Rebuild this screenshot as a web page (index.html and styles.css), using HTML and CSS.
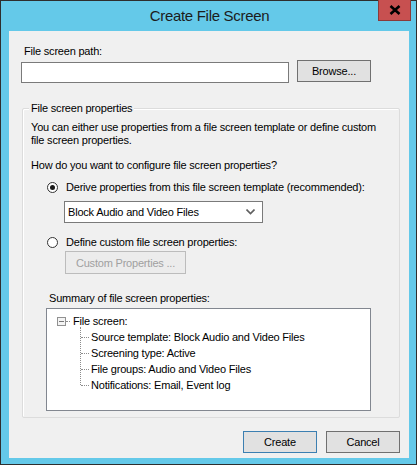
FILE: index.html
```html
<!DOCTYPE html>
<html>
<head>
<meta charset="utf-8">
<link rel="stylesheet" href="styles.css">
</head>
<body>
<div class="window">
  <div class="titlebar">
    <span class="title">Create File Screen</span>
    <div class="close"><svg width="12" height="10" viewBox="0 0 12 10"><path d="M1.5 1 L10.5 9 M10.5 1 L1.5 9" stroke="#000" stroke-width="2.6"/></svg></div>
  </div>
  <div class="client">
    <div class="path-label">File screen path:</div>
    <div class="path-row">
      <div class="textbox"></div>
      <div class="btn browse">Browse...</div>
    </div>
    <div class="group">
      <div class="legend">File screen properties</div>
      <p class="intro">You can either use properties from a file screen template or define custom<br>file screen properties.</p>
      <p class="question">How do you want to configure file screen properties?</p>
      <div class="radio-row r1"><span class="radio checked"></span><span>Derive properties from this file screen template (recommended):</span></div>
      <div class="combo"><span>Block Audio and Video Files</span><svg width="9" height="6" viewBox="0 0 9 6"><path d="M0.5 0.5 L4.5 4.5 L8.5 0.5" stroke="#606060" stroke-width="1.6" fill="none"/></svg></div>
      <div class="radio-row r2"><span class="radio"></span><span>Define custom file screen properties:</span></div>
      <div class="btn disabled custom">Custom Properties ...</div>
      <div class="summary-label">Summary of file screen properties:</div>
      <div class="tree">
        <div class="tree-root"><span class="expander"></span><span class="hdash"></span><span>File screen:</span></div>
        <div class="tree-children">
          <div class="leaf"><span class="hdash"></span>Source template: Block Audio and Video Files</div>
          <div class="leaf"><span class="hdash"></span>Screening type: Active</div>
          <div class="leaf"><span class="hdash"></span>File groups: Audio and Video Files</div>
          <div class="leaf last"><span class="hdash"></span>Notifications: Email, Event log</div>
        </div>
      </div>
    </div>
    <div class="footer">
      <div class="btn default">Create</div>
      <div class="btn">Cancel</div>
    </div>
  </div>
</div>
</body>
</html>
```
FILE: styles.css
```css
html, body {
  margin: 0;
  padding: 0;
  background: #ffffff;
}
body {
  font-family: "Liberation Sans", Arial, sans-serif;
  font-size: 11px;
  letter-spacing: -0.2px;
  color: #000;
}
.window {
  width: 415px;
  height: 463px;
  border: 1px solid #2e2e2e;
  background: #64c9e9;
  display: flex;
  flex-direction: column;
}
.titlebar {
  height: 30px;
  position: relative;
  display: flex;
  align-items: center;
  justify-content: center;
}
.title {
  font-size: 15px;
  letter-spacing: -0.3px;
  color: #1c1c1c;
  margin-top: -1px;
  margin-left: 2px;
}
.close {
  position: absolute;
  top: -1px;
  right: 5px;
  width: 31px;
  height: 20px;
  background: #c75050;
  border: 1px solid #8a3a3a;
  border-top: none;
  display: flex;
  align-items: center;
  justify-content: center;
}
.client {
  margin: 0 7px 0 8px;
  height: 427px;
  background: #f0f0f0;
  display: flex;
  flex-direction: column;
  position: relative;
}
.path-label {
  margin: 14px 0 0 15px;
  line-height: 13px;
}
.path-row {
  display: flex;
  align-items: flex-start;
  margin: 2px 0 0 12px;
}
.textbox {
  width: 266px;
  height: 19px;
  margin-top: 2px;
  background: #fff;
  border: 1px solid #7a7a7a;
}
.btn {
  box-sizing: border-box;
  height: 22px;
  width: 74px;
  background: #e1e1e1;
  border: 1px solid #707070;
  display: flex;
  align-items: center;
  justify-content: center;
}
.browse {
  margin-left: 8px;
}
.group {
  margin: 25px 0 0 13px;
  width: 376px;
  height: 308px;
  border: 1px solid #dcdcdc;
  border-radius: 2px;
  box-shadow: inset 1px 1px 0 #fff;
  position: relative;
  display: flex;
  flex-direction: column;
}
.legend {
  position: absolute;
  top: -7px;
  left: 6px;
  padding: 0 2px;
  background: #f0f0f0;
  line-height: 13px;
}
.intro {
  margin: 12px 6px 0 8px;
  line-height: 13px;
}
.question {
  margin: 12px 0 0 8px;
  line-height: 13px;
}
.radio-row {
  display: flex;
  align-items: center;
  margin-left: 24px;
  line-height: 13px;
}
.r1 { margin-top: 9px; }
.r2 { margin-top: 13px; }
.radio {
  box-sizing: border-box;
  width: 11px;
  height: 11px;
  border-radius: 50%;
  border: 1px solid #333;
  background: #fff;
  margin-right: 8px;
  display: flex;
  align-items: center;
  justify-content: center;
}
.radio.checked::after {
  content: "";
  width: 5px;
  height: 5px;
  border-radius: 50%;
  background: #1a1a1a;
}
.combo {
  box-sizing: border-box;
  margin: 7px 0 0 41px;
  width: 199px;
  height: 22px;
  background: #fff;
  border: 1px solid #7a7a7a;
  display: flex;
  align-items: center;
  justify-content: space-between;
  padding: 0 7px 0 3px;
}
.custom {
  margin: 2px 0 0 42px;
  width: 121px;
  height: 23px;
  background: #f0f0f0;
  border-color: #bcbcbc;
  color: #a0a0a0;
}
.btn.disabled {
  background: #ececec;
}
.summary-label {
  margin: 18px 0 0 26px;
  line-height: 13px;
}
.tree {
  margin: 3px 0 0 23px;
  width: 325px;
  height: 103px;
  box-sizing: border-box;
  background: #fff;
  border: 1px solid #828790;
  padding: 4px 0 0 10px;
  line-height: 16px;
}
.tree-root {
  display: flex;
  align-items: center;
  height: 16px;
}
.expander {
  box-sizing: border-box;
  width: 9px;
  height: 9px;
  border: 1px solid #919191;
  background: linear-gradient(#777, #777) center / 5px 1px no-repeat, #f4f4f4;
}
.hdash {
  display: inline-block;
  width: 6px;
  border-top: 1px dotted #8c8c8c;
  margin: 0 4px 0 0;
  vertical-align: middle;
}
.tree-root .hdash {
  width: 4px;
  margin-left: 0;
  margin-right: 3px;
}
.tree-children {
  margin-left: 23px;
  border-left: 1px dotted #8c8c8c;
  height: 56px;
  margin-top: -2px;
  padding-top: 2px;
  position: relative;
}
.leaf {
  height: 16px;
  display: flex;
  align-items: center;
  position: relative;
}
.leaf .hdash {
  width: 8px;
  margin-right: 2px;
}
.footer {
  margin-top: auto;
  margin-bottom: 5px;
  display: flex;
  justify-content: flex-end;
  gap: 9px;
  padding-right: 9px;
}
.btn.default {
  border-color: #3c7fb1;
}
```
